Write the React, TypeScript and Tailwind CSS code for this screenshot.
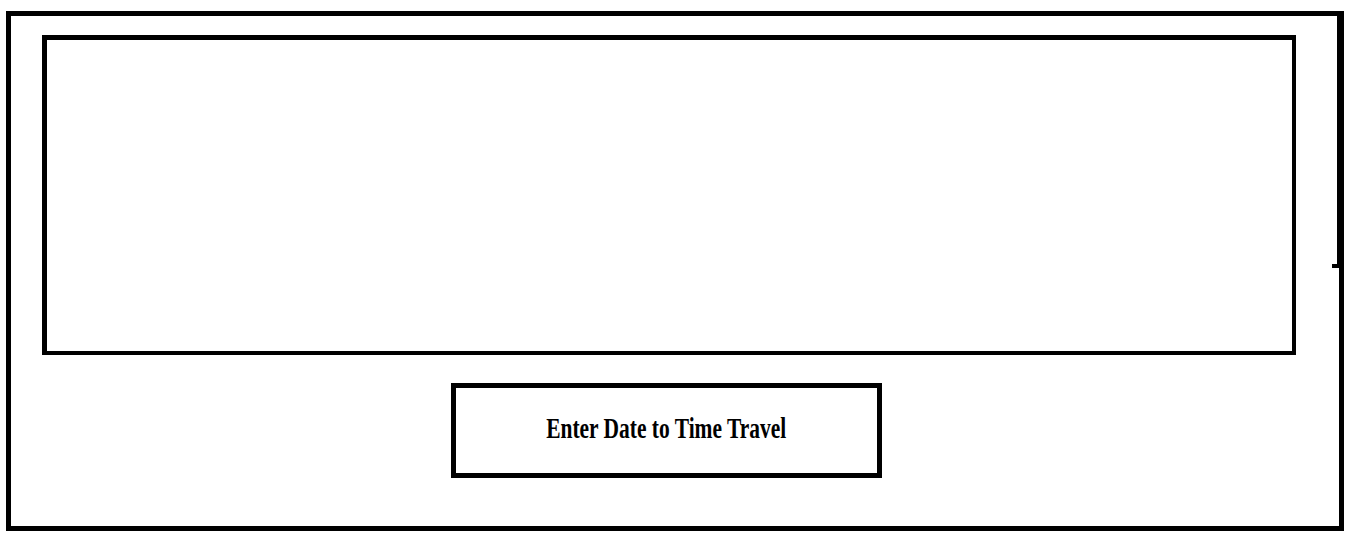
import React from "react";

export default function App() {
  return (
    <div className="min-h-[548px] bg-white pt-[11px] pl-[6px]">
      <div className="relative w-[1338px] h-[520px] border-[5px] border-black pt-[19px] pl-[31px]">
        {/* thicker upper part of the right edge and its little tick */}
        <div className="absolute right-[-5px] top-[-5px] w-[7px] h-[257px] bg-black" />
        <div className="absolute right-[1px] top-[248px] w-[6px] h-[4px] bg-black" />

        <div className="w-[1254px] h-[320px] border-l-[5px] border-t-[5px] border-r-4 border-b-4 border-black bg-white" />

        <button className="mt-[28px] ml-[409px] w-[431px] h-[95px] border-[5px] border-black bg-white flex items-center justify-center pb-1">
          <span className="block scale-x-[0.74] font-['Liberation_Serif',serif] font-bold text-[29px] leading-none text-black whitespace-nowrap">
            Enter Date to Time Travel
          </span>
        </button>
      </div>
    </div>
  );
}
